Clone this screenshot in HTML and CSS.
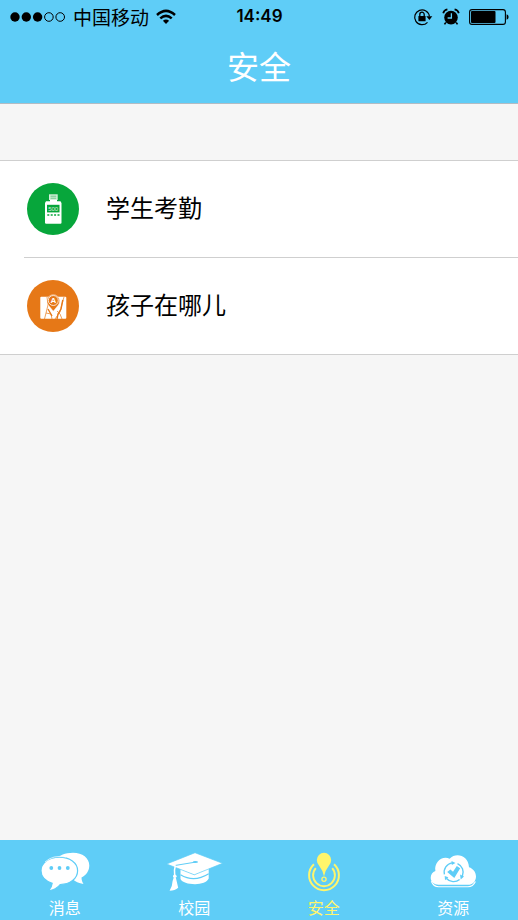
FILE: index.html
```html
<!DOCTYPE html>
<html lang="zh-CN">
<head>
<meta charset="utf-8">
<meta name="viewport" content="width=device-width, initial-scale=1">
<title>安全</title>
<link rel="stylesheet" href="styles.css">
</head>
<body>
<div class="app">
  <header class="header">
    <div class="status">
      <div class="status-left">
        <svg class="signal" width="56" height="12" viewBox="0 0 56 12" aria-hidden="true">
          <circle cx="5" cy="6" r="4.7"/><circle cx="16.3" cy="6" r="4.7"/><circle cx="27.6" cy="6" r="4.7"/>
          <g fill="none" stroke="#000"><circle cx="38.9" cy="6" r="4.3"/><circle cx="50.2" cy="6" r="4.3"/></g>
        </svg>
        <span class="carrier">中国移动</span>
        <svg width="20" height="16" viewBox="0 0 20 16" aria-hidden="true">
          <g fill="none" stroke="#000" stroke-width="2.5"><path d="M1 6Q10-2.3 19 6"/><path d="M4.3 9.4Q10 4.3 15.7 9.4"/></g>
          <path d="M6.9 11.8Q10 9.2 13.1 11.8L10 15Z"/>
        </svg>
      </div>
      <time class="clock">14:49</time>
      <div class="status-right">
        <svg width="20" height="18" viewBox="0 0 20 18" aria-hidden="true">
          <path d="M14.5 14.3A7.4 7.4 0 1 1 16.4 8.4" fill="none" stroke="#000" stroke-width="1.2"/>
          <path d="M13.3 8.2H19.3L16.4 12Z"/>
          <rect x="5.4" y="8" width="7.2" height="5.3" rx=".6"/>
          <path d="M6.8 8V6.4a2.2 2.2 0 0 1 4.4 0V8" fill="none" stroke="#000" stroke-width="1.3"/>
        </svg>
        <svg width="18" height="18" viewBox="0 0 18 18" aria-hidden="true">
          <circle cx="9" cy="9.6" r="6.8"/>
          <path d="M1.2 5.2Q2 2 5.4 1.4M16.8 5.2Q16 2 12.6 1.4" fill="none" stroke="#000" stroke-width="1.7"/>
          <path d="M3.8 14.5L2.5 16.4M14.2 14.5L15.5 16.4" stroke="#000" stroke-width="1.6"/>
          <path d="M9.4 5.2V10H5.6" fill="none" stroke="#5fcdf7" stroke-width="1.3"/>
        </svg>
        <svg width="40" height="16" viewBox="0 0 40 16" aria-hidden="true">
          <rect x=".6" y=".6" width="35.8" height="14.8" rx="2.4" fill="none" stroke="#000" stroke-width="1.1"/>
          <rect x="2" y="2" width="24.5" height="12" rx="1"/>
          <path d="M37.6 5.2Q39.6 6 39.6 8T37.6 10.8Z"/>
        </svg>
      </div>
    </div>
    <h1 class="title">安全</h1>
  </header>

  <main class="content">
    <ul class="list">
      <li>
        <a class="row" href="#attendance">
          <svg class="row-icon" width="52" height="52" viewBox="0 0 52 52" aria-hidden="true">
            <circle cx="26" cy="26" r="26" fill="#07a63b"/>
            <path d="M22 11.3H30.7V17H22Z" fill="#d6f0dc"/>
            <path d="M23.5 13.2H29.3M23.5 15.2H29.3" stroke="#4fbd70" stroke-width=".8"/>
            <path d="M23 17H30V18.3H33.5L34.5 20V39.7Q34.5 40.8 33.4 40.8H19.2Q18 40.8 18 39.7V20L19 18.3H23Z" fill="#fff"/>
            <rect x="20" y="21.8" width="12.5" height="7.6" fill="#07a63b"/>
            <text x="26.2" y="27.9" class="meter">500</text>
            <path d="M20.3 32H32.6" stroke="#07a63b" stroke-width="1.6" stroke-dasharray="2 1.4"/>
          </svg>
          <span>学生考勤</span>
        </a>
      </li>
      <li>
        <a class="row" href="#location">
          <svg class="row-icon" width="52" height="52" viewBox="0 0 52 52" aria-hidden="true">
            <circle cx="26" cy="26" r="26" fill="#e67817"/>
            <rect x="13.3" y="16.8" width="26" height="22" rx="1" fill="#fff"/>
            <g fill="none" stroke="#e67817" stroke-width=".7">
              <path d="M20 17L21 25L17.5 39M28 39L33 32L35 24L37 17M19 33L24 34L25 39M30 31L33 34L35 39"/>
            </g>
            <path d="M30 39L31 34L34 29L35.8 20M21 29L25 36" fill="none" stroke="#e67817" stroke-width="1.4"/>
            <path d="M26.3 31.2L21.2 25A6.4 6.4 0 1 1 31.4 25Z" fill="#e67817" stroke="#fff" stroke-width=".5"/>
            <circle cx="26.3" cy="20.5" r="5" fill="#e67817" stroke="#fff" stroke-width=".8"/>
            <text x="26.3" y="23.4" class="marker">A</text>
          </svg>
          <span>孩子在哪儿</span>
        </a>
      </li>
    </ul>
  </main>

  <nav class="tabs">
    <a class="tab" href="#messages">
      <svg width="60" height="44" viewBox="0 0 60 44" aria-hidden="true">
        <path d="M38 3.7C47.5 3.7 54.3 9 54.3 16.5C54.3 21.5 51.5 26 46.5 28.5C46.5 31.5 47.5 33.5 48.5 35C44 34.5 40 32.5 37.5 30L22 10C24 6.5 30 3.7 38 3.7Z" fill="#fff"/>
        <path d="M24.2 8.2C34.8 8.2 42.6 14 42.6 21.7C42.6 29.5 35 35.5 25.2 35.5C22.5 39 18.8 41 13.5 41.8C15.7 39.5 17 37 17.2 34.2C10.6 32 6 27.3 6 21.7C6 14 13.9 8.2 24.2 8.2Z" fill="#fff" stroke="#5fcdf7" stroke-width="1.2"/>
        <path d="M10 13Q18 5.5 31 8" fill="none" stroke="#fff" stroke-width=".7"/>
        <g fill="#5fcdf7"><circle cx="16.3" cy="19" r="1.9"/><circle cx="24.5" cy="19" r="1.9"/><circle cx="32.8" cy="19" r="1.9"/></g>
      </svg>
      <span>消息</span>
    </a>
    <a class="tab" href="#campus">
      <svg width="60" height="44" viewBox="0 0 60 44" aria-hidden="true">
        <path d="M16.5 20L30.3 25.8L44.7 19V29.5C43 33.2 37.5 35.2 31 35.2C24 35.2 18 33.2 16.5 30Z" fill="#fff"/>
        <path d="M16.5 25.8Q30 34 44.7 24.8" fill="none" stroke="#5fcdf7" stroke-width="1.2"/>
        <path d="M2.6 15L31 3.7L58.6 14.3L30.3 25.8Z" fill="#fff" stroke="#5fcdf7" stroke-width=".7"/>
        <path d="M31 13.2L11.5 16.4" fill="none" stroke="#5fcdf7" stroke-width="1"/>
        <ellipse cx="31.4" cy="13" rx="2.6" ry="1.1" fill="#5fcdf7"/>
        <path d="M11.4 16.5Q9.8 21 10.7 27" fill="none" stroke="#fff" stroke-width="1.5"/>
        <circle cx="10.8" cy="27.3" r="1.8" fill="#fff"/>
        <path d="M9.8 28.5H11.8L14.2 38.8Q11 41.8 5.6 41.8Q8.5 37 8.6 32Z" fill="#fff"/>
      </svg>
      <span>校园</span>
    </a>
    <a class="tab tab-active" href="#safety" aria-current="page">
      <svg width="60" height="44" viewBox="0 0 60 44" aria-hidden="true">
        <path d="M30 27.5Q29.3 22 25 16.5Q22.8 13.8 22.8 11A7.2 7.2 0 0 1 37.2 11Q37.2 13.8 35 16.5Q30.7 22 30 27.5Z" fill="#fff56b"/>
        <g fill="none" stroke="#fff56b">
          <circle cx="30" cy="30.2" r="2.1" stroke-width="1.3"/>
          <path d="M20 15.2A14.9 14.9 0 1 0 40 15.2" stroke-width="2"/>
          <path d="M21.8 19.1A10.9 10.9 0 1 0 38.2 19.1" stroke-width="1.9"/>
        </g>
      </svg>
      <span>安全</span>
    </a>
    <a class="tab" href="#resources">
      <svg width="60" height="44" viewBox="0 0 60 44" aria-hidden="true">
        <path d="M15.5 35.8C11 35.8 7.7 32.6 7.7 28.8C7.7 25.5 9.6 23 12.4 22C10.8 13.5 19 6.2 26.6 9.7C33 2.8 45.5 6.3 46 18.2C50.2 19.5 53 23.3 53 27.4C53 32.2 49.5 35.8 45 35.8Z" fill="#fff"/>
        <path d="M8.3 32.2Q10.5 37.7 15.5 37.7H45Q50 37.7 52.4 32.5" fill="none" stroke="#fff" stroke-width="1.1"/>
        <g fill="none" stroke="#5fcdf7" stroke-width="1.4">
          <path d="M21.4 25.4A9.5 9.5 0 0 1 29.2 13.9M34.5 14.6A9.5 9.5 0 0 1 39.4 27M36.6 30.5A9.5 9.5 0 0 1 23.5 29.5"/>
        </g>
        <g fill="#5fcdf7"><path d="M28.5 12L32.5 14L28.8 16Z"/><path d="M37.1 25.5L41 27.5L37.7 30.6Z"/><path d="M22 31.2L21.7 27.1L25.4 28.2Z"/>
          <path d="M24.2 22.9L27.4 20.6L30 22.8L33.8 17L37.2 19.3L31.3 29Z"/></g>
      </svg>
      <span>资源</span>
    </a>
  </nav>
</div>
</body>
</html>
```

FILE: styles.css
```css
* {
  box-sizing: border-box;
}

body {
  margin: 0;
  background: #f6f6f6;
  color: #000;
  font-family: "Liberation Sans", "Noto Sans CJK SC", sans-serif;
}

a {
  color: inherit;
  text-decoration: none;
}

svg {
  display: block;
  flex: none;
}

.app {
  display: flex;
  flex-direction: column;
  min-height: 100vh;
}

.header {
  background: #5fcdf7;
  border-bottom: 1px solid #b2bcc4;
}

.status {
  display: grid;
  grid-template-columns: 1fr auto 1fr;
  align-items: center;
  height: 33px;
  padding: 0 9px 0 10px;
}

.status-left,
.status-right {
  display: flex;
  align-items: center;
}

.status-left {
  gap: 7px;
}

.status-right {
  justify-content: flex-end;
  gap: 9px;
}

.carrier {
  font-family: "Noto Sans CJK SC", sans-serif;
  font-size: 19px;
  line-height: 33px;
}

.clock {
  font-family: Inter, "Liberation Sans", sans-serif;
  font-size: 17px;
  font-weight: 600;
  line-height: 33px;
}

.title {
  margin: 0;
  color: #fff;
  font-size: 32px;
  font-weight: 400;
  line-height: 70px;
  text-align: center;
}

.content {
  flex: 1;
  padding-top: 56px;
}

.list {
  margin: 0;
  padding: 0 0 0 24px;
  list-style: none;
  background: #fff;
  border-top: 1px solid #cfcfcf;
  border-bottom: 1px solid #cfcfcf;
}

.list li + li {
  border-top: 1px solid #cfcfcf;
}

.row {
  display: flex;
  align-items: center;
  gap: 27px;
  height: 96px;
  padding-left: 3px;
  font-size: 24px;
  line-height: 32px;
}

.meter {
  fill: #d6f0dc;
  font-size: 6px;
  text-anchor: middle;
}

.marker {
  fill: #fff;
  font-size: 8px;
  font-weight: 700;
  text-anchor: middle;
}

.tabs {
  display: grid;
  grid-template-columns: repeat(4, 1fr);
  height: 80px;
  padding-top: 9px;
  background: #5fcdf7;
}

.tab {
  display: flex;
  flex-direction: column;
  align-items: center;
  gap: 5px;
  color: #fff;
  font-size: 16px;
  line-height: 22px;
}

.tab-active {
  color: #fff56b;
}
```
